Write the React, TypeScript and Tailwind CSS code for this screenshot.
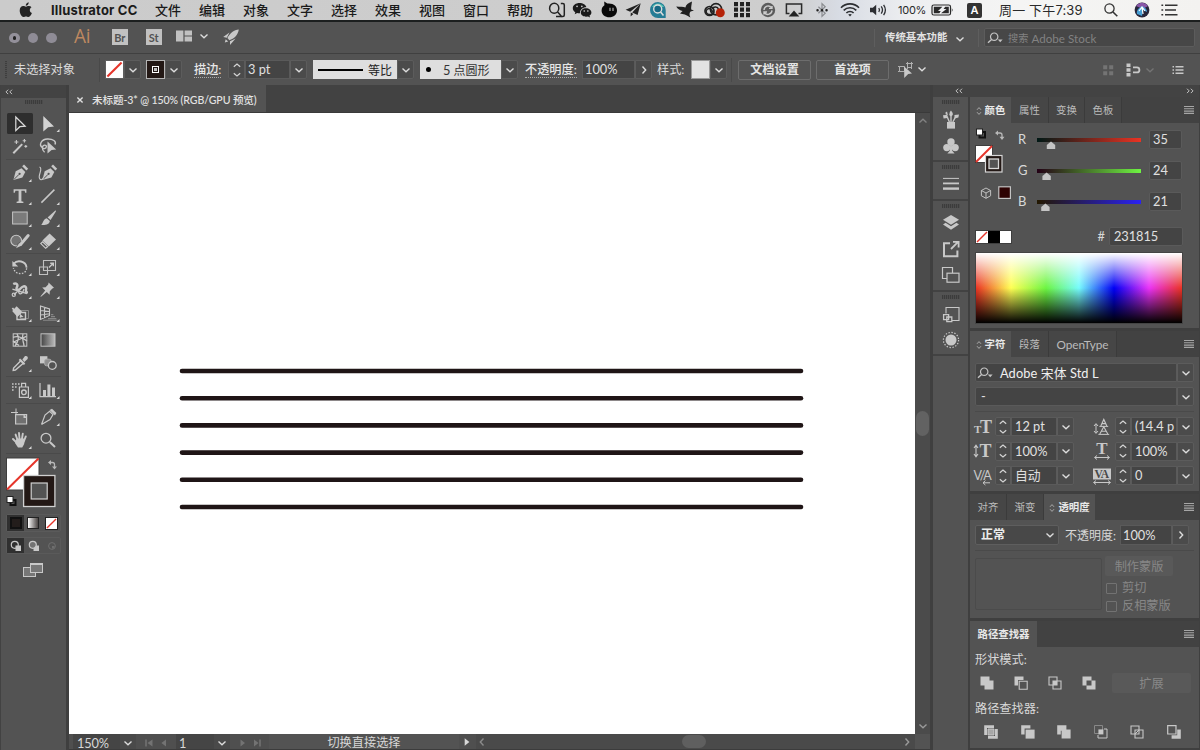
import type { ReactNode } from "react";
import { clsx } from "clsx";

const LIGHT = "#c8c8c8";

/* Icon canvas with the origin in the middle, one unit per pixel */
function Glyph({
  w = 20,
  h = 20,
  className,
  children,
}: {
  w?: number;
  h?: number;
  className?: string;
  children: ReactNode;
}) {
  return (
    <svg
      width={w}
      height={h}
      viewBox={`${-w / 2} ${-h / 2} ${w} ${h}`}
      className={clsx("block shrink-0", className)}
      fill="none"
      stroke="none"
    >
      {children}
    </svg>
  );
}

function Chevron({ dir = "down", color = "#dcdcdc" }: { dir?: "down" | "up" | "left" | "right"; color?: string }) {
  const rotate = { down: 0, left: 90, up: 180, right: 270 }[dir];
  return (
    <Glyph w={10} h={10}>
      <path d="M-3.5-1.5L0 1.7L3.5-1.5" stroke={color} strokeWidth="1.4" transform={`rotate(${rotate})`} />
    </Glyph>
  );
}

function DoubleChevron({ flip = false }: { flip?: boolean }) {
  return (
    <Glyph w={10} h={8}>
      <path
        d="M-.8-2.3L-3-.1L-.8 2.1M3-2.3L.8-.1L3 2.1"
        stroke="#c4c4c4"
        transform={flip ? "scale(-1 1)" : undefined}
      />
    </Glyph>
  );
}

function Grip() {
  return (
    <div className="h-[4px] w-[18px] shrink-0 bg-[repeating-linear-gradient(90deg,#3c3c3c_0_1px,#4c4c4c_1px_2px)]" />
  );
}

function Arrow({ className, dir = "down" }: { className?: string; dir?: "down" | "right" }) {
  return (
    <div
      className={clsx(
        "flex h-full w-[17px] shrink-0 items-center justify-center rounded-r-[2px] border border-[#5c5c5c] bg-[#4b4b4b]",
        className,
      )}
    >
      <Chevron dir={dir} />
    </div>
  );
}

function Stepper({ className }: { className?: string }) {
  return (
    <div
      className={clsx(
        "flex h-full shrink-0 flex-col items-center justify-center rounded-l-[2px] border border-[#5c5c5c] bg-[#4b4b4b]",
        className,
      )}
    >
      <Glyph w={10} h={16}>
        <path d="M-3.2-3.2L0-6L3.2-3.2M-3.2 3.2L0 6L3.2 3.2" stroke="#d4d4d4" strokeWidth="1.2" />
      </Glyph>
    </div>
  );
}

function Field({ className, children }: { className?: string; children?: ReactNode }) {
  return (
    <div
      className={clsx(
        "flex h-full shrink-0 items-center overflow-hidden whitespace-nowrap border border-[#5a5a5a] bg-[#444] px-[2px] text-[12.8px] leading-none text-[#e0e0e0]",
        className,
      )}
    >
      {children}
    </div>
  );
}

/* ---------- macOS menu bar ---------- */

const menus = ["文件", "编辑", "对象", "文字", "选择", "效果", "视图", "窗口", "帮助"];

function Cell({ className, children }: { className: string; children: ReactNode }) {
  return <div className={clsx("flex shrink-0 items-center justify-center", className)}>{children}</div>;
}

function MenuBar() {
  return (
    <div className="flex h-[22px] shrink-0 items-center border-b-[2px] border-[#1c1f1f] bg-[linear-gradient(90deg,#cbcbcb_0%,#cecece_66%,#d8dce4_70%,#eeeff1_76%,#f5f5f4_85%,#f3f2f0_100%)] font-[Inter,'Noto_Sans_CJK_SC',sans-serif] text-[13px] leading-none text-[#1b1b1b]">
      <Cell className="ml-[15px] w-[21px]">
        <Glyph w={16} h={18}>
          <path
            d="M2.9-3.9C1.6-4 .8-3.2 0-3.2C-.8-3.2-1.7-3.9-2.8-3.9C-4.8-3.8-6.3-2.2-6.3.5C-6.3 3.5-4.2 7-2.5 7C-1.6 7-1 6.4 0 6.4C1 6.4 1.5 7 2.5 7C4 7 5.4 4.7 5.9 3.1C4.6 2.6 3.8 1.5 3.8 0C3.8-1.2 4.5-2.2 5.5-2.8C4.9-3.5 4-3.9 2.9-3.9ZM2.7-7.8C1-7.6-.4-6-.2-4.3C1.5-4.3 2.9-6 2.7-7.8Z"
            fill="#222"
          />
        </Glyph>
      </Cell>
      <div className="ml-[15px] w-[104px] shrink-0 whitespace-nowrap text-[13px] font-bold tracking-[0.2px]">
        Illustrator CC
      </div>
      {menus.map((m) => (
        <div key={m} className="w-[44px] shrink-0 font-medium">
          {m}
        </div>
      ))}
      <Cell className="-ml-[6px] w-[24px]">
        <Glyph>
          <path
            d="M3.8-6.5H5.8Q7.3-6.5 7.3-5V5Q7.3 6.5 5.8 6.5H-1M-2.8-6.7A4.6 5 0 1 0-2.8 3.3A4.6 5 0 1 0-2.8-6.7M.7 2L5 7"
            stroke="#222"
            strokeWidth="1.5"
          />
        </Glyph>
      </Cell>
      <Cell className="w-[26px]">
        <Glyph>
          <path
            d="M-2.4-7C-6.2-7-9.2-4.8-9.2-1.8C-9.2 0-8.2 1.3-6.7 2.2L-7.3 4.3L-4.8 3Q-3.3 3.4-2 3.2C-2.5 0 .8-2.8 4.4-2.7C3.8-5.3 1-7-2.4-7Z"
            fill="#1b1b1b"
          />
          <path
            d="M4-1.8C.8-1.8-1.2.2-1.2 2.5C-1.2 5 1.3 6.7 4 6.7L6 6.4L8 7.4L7.5 5.6C8.8 4.8 9.4 3.7 9.4 2.5C9.4.1 7-1.8 4-1.8Z"
            fill="#1b1b1b"
          />
          <path d="M-5-3.6h.1M-.2-3.6h.1M2.2 1h.1M5.8 1h.1" stroke="#ccc" strokeWidth="1.6" strokeLinecap="round" />
        </Glyph>
      </Cell>
      <Cell className="w-[27px]">
        <Glyph>
          <path d="M-4.8-8.6L-1.6-6.4C4.7-7 8-3.5 8 .4C8 4.4 4.5 7.2 .4 7.2C-4 7.2-7.4 4.4-7.4.4C-7.4-2-6.2-3.8-4.6-4.8Z" fill="#090909" />
          <path d="M1-2.2V1M4-2.2V1" stroke="#bbb" strokeWidth="1.1" />
        </Glyph>
      </Cell>
      <Cell className="w-[22px]">
        <Glyph>
          <path d="M7.7-6.8L-7.4-.2L-2.8 1.8ZM7.7-6.8L-.8 2.6L4.6 5ZM-2.2 2.6L-2.4 6.5L.4 4Z" fill="#202020" />
        </Glyph>
      </Cell>
      <Cell className="w-[27px]">
        <Glyph>
          <path d="M0-8A8 8 0 1 0 0 8H7.7V0A8 8 0 0 0 0-8Z" fill="#257c95" />
          <path d="M-6-3A7 7 0 0 1 6-3" fill="#55c3b4" />
          <circle cx="-.3" cy="-1" r="4" fill="#176883" stroke="#ddd" strokeWidth="1.4" />
          <path d="M2.6 2L5.5 5.5" stroke="#ddd" strokeWidth="1.6" />
        </Glyph>
      </Cell>
      <Cell className="w-[28px]">
        <Glyph>
          <path
            d="M7-8.4C3-6.8 1-5 .4-2.6C-1.6-3.6-5-3.2-8.8-3.6C-7.5-1.2-4.6.4-2.4 1L-5 3.4C-1.5 3.8 1 4.6 5.4 7.4C4 4.6 4.4 2.6 5.6 1.4L9 .6L6.2-.6C6-3 6.6-5 7-8.4Z"
            fill="#202020"
          />
        </Glyph>
      </Cell>
      <Cell className="w-[30px]">
        <Glyph w={22}>
          <circle cx="-4.5" cy="1" r="4.5" stroke="#222" strokeWidth="1.7" />
          <circle cx="2" cy="-.8" r="5.6" stroke="#222" strokeWidth="1.7" />
          <path d="M-1.5 4.5H-5A3 3 0 1 1-3.5-1.2L0 3M-1.8-1A3.4 3.4 0 0 1 4.6-.5" stroke="#222" strokeWidth="1.4" />
          <circle cx="6.3" cy="2.7" r="4.5" fill="#b52208" />
        </Glyph>
      </Cell>
      <Cell className="w-[26px]">
        <Glyph>
          {[-6, -0.5, 5].map((y) =>
            [-6, 0, 6].map((x) => <rect key={`${x}${y}`} x={x - 2} y={y - 2} width="4" height="4.2" fill="#222" />),
          )}
        </Glyph>
      </Cell>
      <Cell className="w-[25px]">
        <Glyph>
          <circle r="7.2" fill="#5c5c5c" />
          <path d="M-4 0A4.2 4.2 0 0 1 3.5-2.4M4 .4A4.2 4.2 0 0 1-3.5 2.8M4-4V-1.6H1M-4 4.4V2H-1" stroke="#ccc" strokeWidth="1.4" />
        </Glyph>
      </Cell>
      <Cell className="w-[27px]">
        <Glyph>
          <path d="M-4.5 3.6H-7.6V-6H7.6V3.6H4.5" stroke="#2b2b2b" strokeWidth="1.5" />
          <path d="M0 .5L5.3 6.6H-5.3Z" fill="#222" />
        </Glyph>
      </Cell>
      <Cell className="w-[29px]">
        <Glyph>
          <path d="M-3.6-3.2L3.2 3.2L0 6.4V-6.4L3.2-3.2L-3.6 3.2" stroke="#8a8c90" strokeWidth="1.2" />
          <path d="M-4.5.3h.1M0 .3h.1M4.5.3h.1" stroke="#222" strokeWidth="2.4" strokeLinecap="round" />
        </Glyph>
      </Cell>
      <Cell className="w-[28px]">
        <Glyph>
          <path
            d="M-9-2.3A12.6 12.6 0 0 1 9-2.3M-6.3.4A8.8 8.8 0 0 1 6.3.4M-3.6 3A5 5 0 0 1 3.6 3"
            stroke="#2c2e32"
            strokeWidth="1.6"
          />
          <path d="M-1.8 4.6Q0 3.2 1.8 4.6L0 6.6Z" fill="#2c2e32" />
        </Glyph>
      </Cell>
      <Cell className="w-[27px]">
        <Glyph>
          <path d="M-8-2.3H-5.2L-1.8-5.2V5.2L-5.2 2.3H-8Z" fill="#2c2e32" />
          <path d="M.8-2Q2.2 0 .8 2M3.2-3.6Q5.8 0 3.2 3.6M5.6-5.2Q9.2 0 5.6 5.2" stroke="#2c2e32" strokeWidth="1.3" />
        </Glyph>
      </Cell>
      <div className="ml-[7px] w-[32px] shrink-0 text-[11px] tracking-[-0.25px] text-[#2a2a2a]">100%</div>
      <Cell className="w-[23px]">
        <Glyph w={24}>
          <rect x="-10" y="-5" width="18.5" height="10" rx="1.8" stroke="#2a2a2a" strokeWidth="1.2" />
          <path d="M-8.2-3.2H.4L-4 1H-1.3L-2.6 3.2H-8.2ZM3.2-3.2H6.8V3.2H-1L4.5-1H1.6Z" fill="#2a2a2a" />
          <path d="M9.8-2Q11.6 0 9.8 2Z" fill="#2a2a2a" />
        </Glyph>
      </Cell>
      <Cell className="ml-[14px] h-[15px] w-[15px] rounded-[2px] bg-[#333] text-[11px] font-semibold text-white">A</Cell>
      <div className="ml-[17px] w-[89px] shrink-0 whitespace-nowrap text-[13px] tracking-[0.15px] text-[#2a2a2a]">
        周一 下午7:39
      </div>
      <Cell className="w-[46px]">
        <Glyph>
          <circle cx="-1.5" cy="-1.5" r="4.6" stroke="#333" strokeWidth="1.3" />
          <path d="M2 2L6.3 6.3" stroke="#333" strokeWidth="1.6" />
        </Glyph>
      </Cell>
      <Cell className="w-[16px]">
        <Glyph w={16} h={16}>
          <circle r="7.4" fill="#27263a" />
          <path d="M-6-4A7.2 7.2 0 0 1 6-4L1-1Z" fill="#8a58a8" />
          <path d="M-5 4Q-6-1 0-4Q5-2 5 2L1 0L0 6Z" fill="#479fd5" />
          <path d="M-3 1L0-3L3 1M0-3L1 4" stroke="#fff" strokeWidth="1.2" />
        </Glyph>
      </Cell>
      <Cell className="w-[39px]">
        <Glyph>
          <path d="M-5-4.8H7.5M-5 0H6M-5 4.8H7.5" stroke="#333" strokeWidth="1.6" />
          <path d="M-8.6-4.8H-6.8M-8.6 0H-6.8M-8.6 4.8H-6.8" stroke="#333" strokeWidth="1.6" />
        </Glyph>
      </Cell>
    </div>
  );
}

/* ---------- Application bar ---------- */

function SearchIcon() {
  return (
    <Glyph w={16} h={12}>
      <circle cx="-.8" cy="-1.3" r="3.7" stroke="#c4c4c4" strokeWidth="1.2" />
      <path d="M-3.4 1.4L-7 4.8" stroke="#c4c4c4" strokeWidth="1.4" />
      <path d="M2.8 1.6H7.6L5.2 4.2Z" fill="#c4c4c4" />
    </Glyph>
  );
}

function AppBar() {
  return (
    <div className="flex h-[32px] shrink-0 items-center border-b border-[#404040] bg-[#535353]">
      <div className="ml-[9px] mt-[1px] flex gap-[8px]">
        <div className="flex size-[10.6px] items-center justify-center rounded-full bg-[#93909a]">
          <div className="size-[3.6px] rounded-full bg-[#222]" />
        </div>
        <div className="size-[10.6px] rounded-full bg-[#8f8c96]" />
        <div className="size-[10.6px] rounded-full bg-[#8f8c96]" />
      </div>
      <div className="ml-[17px] w-[38px] font-[Open_Sans,sans-serif] text-[20px] font-medium leading-none tracking-[-0.2px] text-[#bd8860]">
        <div className="-mt-[3px] origin-left scale-x-[0.95]">Ai</div>
      </div>
      <div className="-mt-px flex size-[16px] items-center justify-center bg-[#c1c1c1] text-[11px] font-bold leading-none text-[#535353]">
        Br
      </div>
      <div className="-mt-px ml-[18px] flex size-[16px] items-center justify-center bg-[#c1c1c1] text-[11px] font-bold leading-none text-[#535353]">
        St
      </div>
      <Glyph w={18} h={12} className="-mt-[3px] ml-[13px]">
        <path d="M-8-5.5H-.6V5.5H-8ZM.6-5.5H8V-.6H.6ZM.6.6H8V5.5H.6Z" fill="#c1c1c1" />
      </Glyph>
      <div className="-mt-[3px] ml-[6px]">
        <Chevron />
      </div>
      <Glyph className="-mt-[2px] ml-[12px]">
        <path
          d="M7.8-7.6C3-7.2-1-4-3.6 1L-1.6 3.2C3 1.6 7-2 7.8-7.6ZM-1.5-4.4L-7.8 0L-4.2.8ZM4.6 1.4L-1 8L-1 4.2ZM-5.3 2.2L-6.2 5.6L-2.8 4.6Z"
          fill="#c8c8c8"
        />
      </Glyph>
      <div className="flex-1" />
      <div className="h-[18px] w-px bg-[#5e5e5e]" />
      <div className="ml-[10px] w-[70px] whitespace-nowrap text-[10.4px] font-bold text-[#e2e2e2]">传统基本功能</div>
      <div className="mt-[2px]">
        <Chevron />
      </div>
      <div className="ml-[13px] h-[18px] w-px bg-[#5e5e5e]" />
      <div className="ml-[5px] mr-[5px] flex h-[19px] w-[211px] items-center rounded-[2px] border border-[#5c5c5c] bg-[#474747] text-[11.6px] text-[#828282]">
        <div className="ml-[2px] w-[21px]">
          <SearchIcon />
        </div>
        <span className="mt-[3px] text-[10.2px]">搜索</span>
        <span className="ml-[3px] mt-[3px] tracking-[0.05px]">Adobe Stock</span>
      </div>
    </div>
  );
}

/* ---------- Control bar ---------- */

function NoneSwatch({ className }: { className: string }) {
  return (
    <svg viewBox="0 0 18 18" className={clsx("block shrink-0", className)}>
      <rect width="18" height="18" fill="#fff" />
      <path d="M1.5 16.5L16.5 1.5" stroke="#e6352b" strokeWidth="2.2" />
    </svg>
  );
}

function ControlBar() {
  return (
    <div className="flex h-[31px] shrink-0 items-center bg-[#535353] text-[12.2px] leading-none text-[#dadada]">
      <div className="ml-[5px] h-[18px] w-[2px] bg-[repeating-linear-gradient(180deg,#3e3e3e_0_1px,#505050_1px_2px)]" />
      <div className="ml-[7px] w-[85px] whitespace-nowrap pt-px">未选择对象</div>
      <div className="h-[24px] w-px bg-[#494949]" />
      <div className="ml-[5px] flex h-[19px]">
        <NoneSwatch className="size-[19px] border border-[#5f5f5f]" />
        <Arrow />
      </div>
      <div className="ml-[5px] flex h-[19px]">
        <div className="flex size-[19px] items-center justify-center border border-[#b5b5b5] bg-[#231815]">
          <div className="flex size-[7px] items-center justify-center border border-white bg-[#231815]">
            <div className="size-[3px] bg-[#c4c4c4]" />
          </div>
        </div>
        <Arrow />
      </div>
      <div className="ml-[12px] w-[33px] whitespace-nowrap pt-[2px] font-medium text-[#e6e6e6]">
        <span className="border-b border-dotted border-[#aaa]">描边:</span>
      </div>
      <div className="ml-px flex h-[19px]">
        <Stepper className="w-[17px]" />
        <Field className="w-[45px]">3 pt</Field>
        <Arrow />
      </div>
      <div className="ml-[6px] flex h-[19px]">
        <div className="flex w-[84px] items-center bg-[#dedede] text-[12px] text-[#222]">
          <div className="ml-[5px] h-[2px] w-[45px] bg-black" />
          <span className="ml-[5px] pt-[2px]">等比</span>
        </div>
        <Arrow />
      </div>
      <div className="ml-[6px] flex h-[19px]">
        <div className="flex w-[81px] items-center bg-[#dedede] text-[12px] text-[#333]">
          <div className="ml-[6px] size-[5px] rounded-full bg-black" />
          <span className="ml-[12px] whitespace-nowrap pt-[2px]">
            <span className="text-[12.8px]">5</span> 点圆形
          </span>
        </div>
        <Arrow />
      </div>
      <div className="ml-[7px] w-[57px] whitespace-nowrap pt-[2px] font-medium text-[#e6e6e6]">
        <span className="border-b border-dotted border-[#aaa]">不透明度:</span>
      </div>
      <div className="flex h-[19px]">
        <Field className="w-[53px]">100%</Field>
        <Arrow dir="right" />
      </div>
      <div className="ml-[5px] w-[34px] whitespace-nowrap pt-[2px]">样式:</div>
      <div className="flex h-[19px]">
        <div className="w-[19px] border border-[#999] bg-[#e2e2e2]" />
        <Arrow />
      </div>
      <div className="ml-[4px] h-[24px] w-px bg-[#494949]" />
      <div className="ml-[6px] flex h-[20px] w-[73px] items-center justify-center rounded-[2px] border border-[#6d6d6d] pt-[2px] font-bold text-[#e4e4e4]">
        文档设置
      </div>
      <div className="ml-[5px] flex h-[20px] w-[73px] items-center justify-center rounded-[2px] border border-[#6d6d6d] pt-[2px] font-bold text-[#e4e4e4]">
        首选项
      </div>
      <Glyph className="ml-[6px]">
        <path d="M-5.5-3.5H-.5V1.5H-5.5ZM2.5-6.5H6.5V-2.5H2.5ZM-7-3.5H-5.5M-7 1.5H-5.5M1-6.5H8M2.5-8V-1M6.5-8V-1" stroke="#b0b0b0" />
        <path d="M-.8-3.4L7 3.6L3.2 4L-.8 8Z" fill={LIGHT} />
      </Glyph>
      <div className="-mt-[2px] ml-[2px]">
        <Chevron />
      </div>
      <div className="flex-1" />
      <Glyph w={14} h={14} className="mr-[10px]">
        <path
          d="M-4.8-4.8H-.8V-.8H-4.8ZM1.2-4.8H5.2V-.8H1.2ZM-4.8 1.2H-.8V5.2H-4.8ZM1.2 1.2H5.2V5.2H1.2Z"
          fill="#747474"
        />
      </Glyph>
      <Glyph w={16} h={16} className="mr-[4px]">
        <path d="M-6.5-6.5H-2.5V-3H-6.5ZM-6.5-1.7H-2.5V1.7H-6.5ZM-6.5 3H-2.5V6.5H-6.5Z" fill={LIGHT} />
        <path d="M0-2.6H3.9A2.5 2.5 0 0 1 3.9 2.4H0" stroke={LIGHT} strokeWidth="1.8" />
      </Glyph>
      <Chevron color="#747474" />
      <Glyph w={14} h={14} className="ml-[16px] mr-[15px]">
        <path d="M-2.5-3.3H5.5M-2.5 0H5.5M-2.5 3.3H5.5" stroke={LIGHT} strokeWidth="1.4" />
        <path d="M-5.5-3.3H-4M-5.5 0H-4M-5.5 3.3H-4" stroke={LIGHT} strokeWidth="1.4" />
      </Glyph>
    </div>
  );
}

/* ---------- Tools ---------- */

function Tool({ sub, active, short, children }: { sub?: boolean; active?: boolean; short?: boolean; children: ReactNode }) {
  return (
    <div className={clsx("flex w-[28px] items-start justify-center", short ? "h-[22.5px]" : "h-[23px]")}>
      <Glyph w={28} h={22}>
        {active && <rect x="-13" y="-10" width="26" height="21" rx="1.5" fill="#2e2e2e" />}
        {children}
        {sub && <path d="M11.5 6V9H8.5Z" fill="#d6d6d6" />}
      </Glyph>
    </div>
  );
}

function ToolGroup({ children }: { children: ReactNode }) {
  return (
    <div className="mx-[5px] mb-[2px] grid grid-cols-[28px_28px] border-b border-[#4a4a4a] pb-px">{children}</div>
  );
}

function PenNib() {
  return (
    <>
      <path d="M1.5-4.8L5.3-1L2.4 4.4L-6.6 7L-4.3-1.8Z" fill={LIGHT} />
      <path d="M-6 6.4L-1 1.4" stroke="#535353" />
      <circle cx="-.4" cy=".8" r="1.1" fill="#535353" />
      <path d="M2.2-6.8L4-8.4L8.2-4.2L6.4-2.4Z" fill={LIGHT} />
    </>
  );
}

function ToolPanel() {
  return (
    <div className="flex w-[69px] shrink-0 flex-col border-l border-r-[3px] border-l-[#424242] border-r-[#3f3f3f] bg-[#535353]">
      <div className="flex h-[13px] shrink-0 items-center bg-[#434343] pl-[3px]">
        <DoubleChevron />
      </div>
      <div className="flex h-[14px] shrink-0 justify-center pt-[2px]">
        <Grip />
      </div>
      <ToolGroup>
        <Tool active>
          <path d="M-4.2-6L5.2 3.2L-.2 3.7L-4.2 7.6Z" stroke="#dcdcdc" strokeWidth="1.2" />
        </Tool>
        <Tool sub>
          <path d="M-4.7-7L6 3.6L.2 4.3L-4.7 8.6Z" fill="#d2d2d2" />
        </Tool>
        <Tool>
          <path d="M-6.7 7.2L2.2-1.9" stroke={LIGHT} strokeWidth="2" />
          <path
            d="M-3.6-6V-2M-5.6-4H-1.6M4.4-7V-3.6M2.7-5.3H6.1M5.8-1V1.8M4.4.4H7.2"
            stroke={LIGHT}
            strokeWidth="1.1"
          />
        </Tool>
        <Tool>
          <path
            d="M-5.6 1.6C-9.4-1-7-6.6-.6-7C5-7.2 8.6-4.5 7-1.5M-5.6 1.6C-5-1.8-1.4-1.4-1.6.8C-1.8 3.2-5.4 3-5.6 1.6C-5.8 3.6-5 5-3.4 6.2"
            stroke={LIGHT}
            strokeWidth="1.4"
          />
          <path d="M-.5-4.5L8.2 3.4L3.6 4L-.5 7.4Z" fill={LIGHT} />
        </Tool>
      </ToolGroup>
      <ToolGroup>
        <Tool short sub>
          <PenNib />
        </Tool>
        <Tool short>
          <g transform="translate(1 0)">
            <PenNib />
          </g>
          <path d="M-8.5-6C-5-4.8-9 .6-8.8 4C-8.5 7.5-5.5 7.5-4.5 4.5" stroke={LIGHT} strokeWidth="1.1" />
        </Tool>
        <Tool short sub>
          <path
            d="M-6.4-6.8H6.4V-3.2H5.2L4.6-5.2H1.4V5.2L3.4 5.8V7H-3.4V5.8L-1.4 5.2V-5.2H-4.6L-5.2-3.2H-6.4Z"
            fill={LIGHT}
          />
        </Tool>
        <Tool short sub>
          <path d="M-6.6 6.6L6.4-6.4" stroke={LIGHT} strokeWidth="1.5" />
        </Tool>
        <Tool short sub>
          <rect x="-7.4" y="-6" width="14.6" height="12" fill="#7b7b7b" stroke="#c4c4c4" />
        </Tool>
        <Tool short sub>
          <path d="M7.6-7.8L8-6.8L2.6 2L-.4-.6Z" fill={LIGHT} />
          <path d="M-1.2.2L1.8 3C1.5 6-1.5 7.4-7 7C-4.8 5.6-5.2 1-1.2.2Z" fill={LIGHT} />
        </Tool>
        <Tool short sub>
          <circle cx="-3.8" cy="-.4" r="5.4" fill="#737373" stroke={LIGHT} strokeWidth="1.1" />
          <path d="M9-5.4L1.2 4.2L-4 7L-1.8 2.2Z" fill="#535353" />
          <path d="M8.2-5.4L.8 3.2" stroke={LIGHT} strokeWidth="3" strokeLinecap="round" />
          <path d="M-.8 2L1.8 4.6L-4 7.2Z" fill={LIGHT} />
        </Tool>
        <Tool short sub>
          <path d="M1.6-7.6L8-1.4L.8 5.6L-5.6-.6Z" fill={LIGHT} />
          <path d="M-5.4.8L-.4 5.6L-2.4 7.2L-7.2 2.6Z" stroke={LIGHT} strokeWidth="1.2" />
        </Tool>
      </ToolGroup>
      <ToolGroup>
        <Tool sub>
          <path d="M-6.2-3.2C-3-7.4 5.8-6.4 6.6.6" stroke={LIGHT} strokeWidth="1.8" />
          <path d="M6.6 1.2C6.2 8-4.5 9-6.6 1" stroke={LIGHT} strokeWidth="1.3" strokeDasharray="1.6 1.4" />
          <path d="M-7.6-6V-.4H-1.8Z" fill={LIGHT} />
        </Tool>
        <Tool sub>
          <path d="M-8.5 0H-.5V7.5H-8.5ZM-4.5-6.5H7.5V3.5H-4.5Z" stroke="#c0c0c0" strokeWidth="1.1" />
          <path d="M1 .5L4.5-3M2.2-3.8H5.3V-.8" stroke={LIGHT} strokeWidth="1.4" />
        </Tool>
        <Tool sub>
          <path
            d="M-6.8-6C-3.6-7.6-1.6-5.4-3.2-2.6C-4.4-.2-2 1 .2-1.2C2.4-3.6 5-4.6 6-2.6C7 0 4 2.4 8 2.4"
            stroke={LIGHT}
            strokeWidth="2.4"
          />
          <path d="M-7.6-.8L7 3.6M-5.8 4.8L-1.4 0C-2 5.2 2.4 5.2 4-1" stroke={LIGHT} strokeWidth="1.3" />
          <circle cx="-6.2" cy="4.8" r="1.6" stroke={LIGHT} strokeWidth="1.2" />
        </Tool>
        <Tool sub>
          <path d="M.6-7.6L6-2.2L4.4-1.4L1.8 1.3L1.6 4.8L-1.2 2L-7 6.8L-7.6 6.4L-2.8.4L-5.8-2.6L-2.4-2.8L.2-5.4Z" fill={LIGHT} />
        </Tool>
        <Tool sub>
          <path d="M.5-2.5H8.5V5.5H.5Z" stroke="#888" />
          <path d="M-3 0V6.5H5.5V-.5H2" stroke={LIGHT} strokeWidth="1.4" />
          <path d="M-3.4-6.8L2.6-.8L-2.6 4L-7.8-2Z" fill={LIGHT} />
          <path d="M-7.6-5L-2 1.5" stroke={LIGHT} strokeWidth="1.8" />
          <path d="M.4 1L3.6 4L-.6 4.4Z" fill={LIGHT} />
        </Tool>
        <Tool sub>
          <path d="M-7.5-7V6.5L1.5 2.5V-4ZM-3.5-6V5M-7.5-2.5L1.5-1.5M-7.5 2L1.5.8" stroke={LIGHT} strokeWidth="1.1" />
          <path d="M3 1.6H5.4M3 3.6H7M0 5.6H8.4M-5 7.2H9.6" stroke="#888" strokeWidth="1.1" />
        </Tool>
      </ToolGroup>
      <ToolGroup>
        <Tool>
          <rect x="-6.8" y="-6.2" width="13.6" height="12.4" stroke={LIGHT} />
          <path
            d="M-3-6C0-2-2 2-5 6M-7-2.6C-2-5 3-2 7 1M-6.6 2.4C-1-1 3-2 6.6-3.6M3-6C1-1 4 2 4 6M-7 1L-1 5.6"
            stroke={LIGHT}
            strokeWidth="1.3"
          />
        </Tool>
        <Tool>
          <defs>
            <linearGradient id="toolGradient">
              <stop offset="0" stopColor="#444" />
              <stop offset="1" stopColor="#bbb" />
            </linearGradient>
          </defs>
          <rect x="-7" y="-6.2" width="14" height="12.4" fill="url(#toolGradient)" stroke="#c0c0c0" />
        </Tool>
        <Tool sub>
          <path d="M1-2.6L3.6 0L-4.6 7L-6.8 7.4L-6.4 5Z" stroke={LIGHT} strokeWidth="1.4" />
          <path d="M-.6-3.8L4.6 1.4" stroke={LIGHT} strokeWidth="2" />
          <path d="M2.4-3.6L5-7Q8.6-7.4 7.6-4L4.4-1Z" fill={LIGHT} />
        </Tool>
        <Tool>
          <rect x="-8" y="-6.8" width="7.4" height="7.2" fill={LIGHT} />
          <rect x="-3.4" y="-3.8" width="6.6" height="6.6" rx="2" fill="#8e8e8e" stroke="#aaa" />
          <circle cx="4.3" cy="2.4" r="3.9" fill="#535353" stroke={LIGHT} strokeWidth="1.3" />
        </Tool>
      </ToolGroup>
      <ToolGroup>
        <Tool sub>
          <path
            d="M-8-6h1.6M-5-6h1.6M-2-6h1.6M-8-3h1.6M-5-3h1.6M-8 0h1.6"
            stroke={LIGHT}
            strokeWidth="1.6"
          />
          <path d="M-.6-3H8.4V7.4H-.6ZM1.6-3V-6.6H5.6V-3" stroke={LIGHT} strokeWidth="1.2" />
          <circle cx="3.9" cy="2.3" r="2.3" stroke={LIGHT} strokeWidth="1.4" />
        </Tool>
        <Tool sub>
          <path d="M-8-7V6.6H8" stroke={LIGHT} strokeWidth="1.2" />
          <path d="M-5 0H-2V6.5H-5ZM-.6-5.4H2.4V6.5H-.6ZM4-2.6H7V6.5H4Z" fill={LIGHT} />
        </Tool>
      </ToolGroup>
      <ToolGroup>
        <Tool>
          <path d="M-4-8.5V-1.5M-9-4.5H-2" stroke={LIGHT} />
          <path d="M-4.4-2.4H6.6V7H-4.4Z" fill="#707070" stroke={LIGHT} strokeWidth="1.2" />
          <path d="M3.5-3V1H7Z" fill={LIGHT} />
        </Tool>
        <Tool sub>
          <path d="M-6.5 7.5L-3-2L1.6-5.6L5-2.4L2 2.6L-6.5 7.5" stroke={LIGHT} strokeWidth="1.2" />
          <path d="M1.6-7L4-8.2L8.4-4L7-1.4Z" fill={LIGHT} />
        </Tool>
        <Tool sub>
          <path
            d="M-4.4-5.4L-2.4 0M-1-7L-.4 0M2.8-6.4L1.8 0M5.8-3.6L3.6 2M-7-1L-3 3"
            stroke={LIGHT}
            strokeWidth="1.9"
            strokeLinecap="round"
          />
          <path d="M-3.4-1.4H4.4L4.2 4L2.2 7.4H-2L-5 3Z" fill={LIGHT} />
        </Tool>
        <Tool>
          <circle cx="-2" cy="-1.8" r="4.9" stroke={LIGHT} strokeWidth="1.3" />
          <path d="M1.8 2L7 7" stroke={LIGHT} strokeWidth="2" />
        </Tool>
      </ToolGroup>
      {/* Fill / stroke proxies */}
      <svg width="65" height="54" viewBox="0 0 65 54" className="block shrink-0" fill="none">
        <rect x="5.5" y="2" width="32.5" height="32" fill="#fff" stroke="#3e3e3e" />
        <path d="M6 33.5L37.5 2.5" stroke="#e6352b" strokeWidth="2" />
        <rect x="22.6" y="19.5" width="31.3" height="31" fill="#231815" stroke="#d0d0d0" strokeWidth="1.3" />
        <rect x="30.2" y="27" width="16" height="16" fill="#535353" stroke="#d0d0d0" strokeWidth="1.2" />
        <path d="M49.5 6.5H51.5Q53.5 6.5 53.5 8.5V11" stroke="#b8b8b8" strokeWidth="1.3" />
        <path d="M47 6.5L50 4V9ZM53.5 13.5L51 10.5H56Z" fill="#b8b8b8" />
        <rect x="9.5" y="44" width="5" height="5" stroke="#111" strokeWidth="2" />
        <rect x="6" y="40.5" width="6" height="6" fill="#fff" stroke="#222" />
      </svg>
      <div className="ml-[5px] mt-[4px] flex h-[18px] w-[55px] items-center rounded-[2px] border border-[#5a5a5a]">
        <div className="flex h-full w-[17px] items-center justify-center bg-[#303030]">
          <div className="size-[12px] border-2 border-[#111] bg-[#231d1b]" />
        </div>
        <div className="ml-[3px] size-[12px] border border-[#222] bg-linear-to-r from-white to-[#4a4543]" />
        <div className="ml-[6px] border border-[#222]">
          <NoneSwatch className="size-[11px]" />
        </div>
      </div>
      <div className="ml-[5px] mt-[5px] flex h-[17px] w-[55px] items-center rounded-[2px] border border-[#5a5a5a]">
        <div className="flex h-full w-[17px] items-center justify-center bg-[#303030]">
          <Glyph w={14} h={14}>
            <circle cx="-1.2" cy="-1.2" r="3.5" stroke={LIGHT} strokeWidth="1.2" />
            <rect x="-.5" y="-.5" width="5.5" height="5.5" fill={LIGHT} />
          </Glyph>
        </div>
        <Glyph w={14} h={14} className="ml-[3px]">
          <rect x="-.5" y="-.5" width="5.5" height="5.5" fill={LIGHT} />
          <circle cx="-1.2" cy="-1.2" r="3.5" fill="#737373" stroke={LIGHT} strokeWidth="1.2" />
        </Glyph>
        <Glyph w={14} h={14} className="ml-[4px]">
          <circle r="3.4" stroke="#6e6e6e" />
          <path d="M0 0H2.5V2.5H0Z" fill="#6e6e6e" />
        </Glyph>
      </div>
      <Glyph w={24} h={18} className="ml-[20px] mt-[7px]">
        <rect x="-9.5" y="-2.5" width="12" height="9" fill="#777" stroke={LIGHT} />
        <rect x="-2.5" y="-6.5" width="12" height="9" fill="#777" stroke={LIGHT} />
        <path d="M-3-6H10" stroke={LIGHT} strokeWidth="2" />
      </Glyph>
    </div>
  );
}

/* ---------- Document ---------- */

const strokes = [258, 285.2, 312.4, 339.6, 366.8, 394];

function DocumentArea() {
  return (
    <div className="flex w-[861px] shrink-0 flex-col">
      <div className="flex h-[28px] shrink-0 items-stretch border-b border-[#3a3a3a] bg-[#424242]">
        <div className="flex w-[197px] items-center bg-[#535353] pt-[2px] leading-none text-[#e4e4e4]">
          <Glyph w={8} h={8} className="ml-[7px]">
            <path d="M-2.6-2.6L2.6 2.6M-2.6 2.6L2.6-2.6" stroke="#e0e0e0" strokeWidth="1.4" />
          </Glyph>
          <span className="ml-[8px] whitespace-nowrap pt-px text-[10.6px] font-medium tracking-[-0.12px]">
            未标题-3* @ 150% (RGB/GPU 预览)
          </span>
        </div>
      </div>
      <div className="flex h-[621px] shrink-0">
        <svg width="846" height="621" viewBox="0 0 846 621" className="block bg-white">
          {strokes.map((y) => (
            <path key={y} d={`M113 ${y}H732`} stroke="#1f1516" strokeWidth="4.6" strokeLinecap="round" />
          ))}
        </svg>
        <div className="flex w-[15px] flex-col items-center bg-[#4b4b4b]">
          <div className="mt-[3px]">
            <Chevron dir="up" color="#828282" />
          </div>
          <div className="mt-[285px] h-[25px] w-[13px] rounded-full bg-[#626262]" />
          <div className="mb-[3px] mt-auto">
            <Chevron color="#9a9a9a" />
          </div>
        </div>
      </div>
      <div className="flex h-[16px] shrink-0 items-center border-b border-[#3c3c3c] bg-[#4f4f4f] leading-none text-[#d8d8d8]">
        <div className="ml-[4px] flex h-[15px] w-[47px] items-center bg-[#454545] pl-[4px] pt-[4px] text-[12.8px] tracking-[-0.2px]">
          150%
        </div>
        <div className="flex h-[15px] w-[16px] items-center justify-center bg-[#4a4a4a] pt-[3px]">
          <Chevron />
        </div>
        <Glyph w={34} h={14} className="ml-[4px] mt-[2px]">
          <path d="M-4.5-3.6V3.6L-9.5 0ZM9-3.6V3.6L4.4 0Z" fill="#737373" />
          <path d="M-11-3.6V3.6" stroke="#737373" strokeWidth="1.5" />
        </Glyph>
        <div className="ml-[2px] flex h-[15px] w-[38px] items-center bg-[#454545] pl-[3px] pt-[4px] text-[12.8px]">1</div>
        <div className="flex h-[15px] w-[16px] items-center justify-center bg-[#4a4a4a] pt-[3px]">
          <Chevron />
        </div>
        <Glyph w={34} h={14} className="mt-[2px]">
          <path d="M-6.5-3.6V3.6L-2-0ZM7-3.6V3.6L11.5 0Z" fill="#737373" />
          <path d="M13-3.6V3.6" stroke="#737373" strokeWidth="1.5" />
        </Glyph>
        <div className="ml-[5px] flex h-[15px] w-[190px] items-center justify-center bg-[#535353] pt-[4px] text-[12.2px]">
          切换直接选择
        </div>
        <Glyph w={10} h={12} className="ml-[3px] mt-px">
          <path d="M-2.3-3.8V3.8L2.4 0Z" fill="#d8d8d8" />
        </Glyph>
        <div className="ml-[4px] flex h-[15px] flex-1 items-center bg-[#4a4a4a] pl-px">
          <Chevron dir="left" color="#8a8a8a" />
          <div className="ml-[195px] h-[13px] w-[24px] rounded-full bg-[#5f5f5f]" />
          <div className="ml-auto mr-[3px]">
            <Chevron dir="right" color="#9a9a9a" />
          </div>
        </div>
        <div className="h-[15px] w-[15px] bg-[#535353]" />
      </div>
    </div>
  );
}

/* ---------- Icon dock ---------- */

function DockGroup({ className, children }: { className: string; children: ReactNode }) {
  return (
    <div className={clsx("flex shrink-0 flex-col items-center border-b-2 border-[#424242] pl-px pt-[3px]", className)}>
      <Grip />
      {children}
    </div>
  );
}

function IconDock() {
  return (
    <div className="w-[35px] shrink-0 bg-[#535353]">
      <DockGroup className="h-[65px]">
        <Glyph className="mt-[6px]">
          <path d="M-4 2H4V8.6H-4Z" fill={LIGHT} />
          <path d="M-4.8-5.6L-1.6 2M0-8V2M5-4L1.8 2" stroke={LIGHT} strokeWidth="1.4" />
          <path
            d="M-1.8-5Q-1.4-8.4 0-9.4Q1.8-7.6 1.8-5L0-3.4ZM-7.4-1.5L-8-4.8L-4.6-5L-3.6-2ZM3.4-5L8-5.6L7.4-2.4L3.6-1.6ZM-6-7L-4-8.4L-3-4.6Z"
            fill={LIGHT}
          />
        </Glyph>
        <Glyph className="mt-[6px]">
          <circle cy="-4" r="3.7" fill={LIGHT} />
          <circle cx="-4.2" cy="1.6" r="3.6" fill={LIGHT} />
          <circle cx="4.2" cy="1.6" r="3.6" fill={LIGHT} />
          <path d="M-.8-2H.8L1.2 4.8L3.6 7.4H-3.6L-1.2 4.8Z" fill={LIGHT} />
        </Glyph>
      </DockGroup>
      <DockGroup className="h-[39px]">
        <Glyph className="mt-[5px]">
          <path d="M-8-5.6H8" stroke={LIGHT} />
          <path d="M-8-.6H8" stroke={LIGHT} strokeWidth="1.8" />
          <path d="M-8 4.6H8" stroke={LIGHT} strokeWidth="2.4" />
        </Glyph>
      </DockGroup>
      <DockGroup className="h-[91px]">
        <Glyph className="mt-[5px]">
          <path d="M0-8L8-3.2L0 1.8L-8-3.2Z" fill={LIGHT} />
          <path d="M-8 1.4L-5.4-.2L0 3.2L5.4-.2L8 1.4L0 6.8Z" fill={LIGHT} />
        </Glyph>
        <Glyph className="mt-[6px]">
          <path d="M-1-5.8H-7V7.2H6.4V1.6" stroke={LIGHT} strokeWidth="2" />
          <path d="M0 0L6.6-6.6M2-7.2H7.6V-1.6" stroke={LIGHT} strokeWidth="1.8" />
        </Glyph>
        <Glyph className="mt-[6px]">
          <path d="M-4 3.5H-8.5V-7.5H1.5V-2" stroke={LIGHT} strokeWidth="1.2" />
          <rect x="-4" y="-1.8" width="12" height="9" stroke={LIGHT} strokeWidth="1.2" />
        </Glyph>
      </DockGroup>
      <DockGroup className="h-[64px]">
        <Glyph className="mt-[5px]">
          <path d="M-5-.5V-6.5H8V6.5H1" stroke={LIGHT} strokeWidth="1.1" />
          <path d="M-7.4.6H-2.4V5.6H-7.4ZM-4.2 3H.8V7.6H-4.2Z" stroke={LIGHT} strokeWidth="1.3" />
        </Glyph>
        <Glyph className="mt-[6px]">
          <circle r="5.5" fill={LIGHT} />
          <circle r="7.6" stroke={LIGHT} strokeWidth="1.2" strokeDasharray="1.4 1.6" />
        </Glyph>
      </DockGroup>
    </div>
  );
}

/* ---------- Right-hand panels ---------- */

function TabStrip({ tabs, active }: { tabs: { label: string; width: string }[]; active: number }) {
  return (
    <div className="flex h-[26px] shrink-0 items-stretch bg-[#424242] text-[10.4px] leading-none">
      {tabs.map((t, i) => (
        <div
          key={t.label}
          className={clsx(
            "flex shrink-0 items-center justify-center whitespace-nowrap pt-px",
            t.width,
            i === active ? "bg-[#535353] font-bold text-[#e8e8e8]" : "border-r border-[#3b3b3b] bg-[#464646] text-[#bcbcbc]",
          )}
        >
          {i === active && tabs.length > 1 && (
            <Glyph w={6} h={10} className="mr-[3px]">
              <path d="M-2-1.2L0-3.4L2-1.2M-2 1.2L0 3.4L2 1.2" stroke="#aaa" />
            </Glyph>
          )}
          {t.label}
        </div>
      ))}
      <Glyph w={12} h={10} className="ml-auto mr-[4px] self-center">
        <path d="M-5-3.5H5M-5-1.2H5M-5 1.1H5M-5 3.4H5" stroke="#a6a6a6" strokeWidth="1.1" />
      </Glyph>
    </div>
  );
}

const channels = [
  { name: "R", value: 35, from: "#001815", to: "#ea3323" },
  { name: "G", value: 24, from: "#230015", to: "#6ef442" },
  { name: "B", value: 21, from: "#231800", to: "#2a22f2" },
];

function ColorPanel() {
  return (
    <div className="flex h-[234px] shrink-0 flex-col border-b-[3px] border-[#3f3f3f]">
      <TabStrip
        active={0}
        tabs={[
          { label: "颜色", width: "w-[41px]" },
          { label: "属性", width: "w-[38px]" },
          { label: "变换", width: "w-[36px]" },
          { label: "色板", width: "w-[37px]" },
        ]}
      />
      <div className="flex h-[100px] shrink-0">
        <svg width="48" height="92" viewBox="0 0 48 92" className="block shrink-0" fill="none">
          <rect x="9.5" y="9" width="5.5" height="5.5" stroke="#111" strokeWidth="2" />
          <rect x="6.5" y="6" width="6" height="6" fill="#fff" stroke="#222" />
          <path d="M27.5 10H30Q32 10 32 12V14" stroke="#b8b8b8" strokeWidth="1.3" />
          <path d="M25 10L28 7.5V12.5ZM32 17L29.5 13.8H34.5Z" fill="#b8b8b8" />
          <rect x="5.5" y="22.5" width="17" height="17" fill="#fff" stroke="#3e3e3e" />
          <path d="M6 39L22 23" stroke="#e6352b" strokeWidth="1.9" />
          <rect x="15.5" y="32.5" width="16.5" height="16.5" fill="#231815" stroke="#d6d6d6" strokeWidth="1.2" />
          <rect x="19" y="36" width="9.5" height="9.5" fill="#535353" stroke="#d6d6d6" strokeWidth="1.3" />
          <path d="M16 65L20.6 67.5V72.8L16 75.3L11.4 72.8V67.5ZM11.4 67.5L16 70L20.6 67.5M16 70V75.3" stroke="#c0c0c0" />
          <rect x="28.8" y="63.8" width="11.6" height="11.6" fill="#2e0303" stroke="#c4c4c4" strokeWidth="1.2" />
        </svg>
        <div className="flex flex-col gap-[12px] pt-[7px]">
          {channels.map((c) => (
            <div key={c.name} className="flex h-[19px] items-center text-[13px] leading-none text-[#d8d8d8]">
              <div className="w-[19px]">{c.name}</div>
              <svg width="104" height="14" viewBox="0 0 104 14" className="mt-[10px] block overflow-visible">
                <defs>
                  <linearGradient id={`channel${c.name}`}>
                    <stop offset="0" stopColor={c.from} />
                    <stop offset="1" stopColor={c.to} />
                  </linearGradient>
                </defs>
                <rect width="104" height="4" fill={`url(#channel${c.name})`} />
                <path
                  d="M0 3.4L4.2 7V11H-4.2V7Z"
                  fill="#c4c4c4"
                  transform={`translate(${(c.value / 255) * 102} 0)`}
                />
              </svg>
              <Field className="ml-[8px] w-[33px] rounded-[2px] pl-[3px]">{c.value}</Field>
            </div>
          ))}
        </div>
      </div>
      <div className="flex h-[29px] shrink-0 items-center text-[12.8px] text-[#d8d8d8]">
        <div className="-mt-[2px] ml-[5px] flex h-[14px] w-[37px] border border-[#3e3e3e]">
          <NoneSwatch className="size-[12px]" />
          <div className="w-[12px] bg-black" />
          <div className="w-[11px] bg-white" />
        </div>
        <span className="-mt-[2px] ml-auto mr-[4px]">#</span>
        <div className="-mt-[2px] mr-[16px] h-[19px]">
          <Field className="w-[74px] rounded-[2px] pl-[4px] tracking-[-0.05px]">231815</Field>
        </div>
      </div>
      <div className="ml-[5px] h-[72px] w-[208px] shrink-0 border border-[#444] bg-[linear-gradient(180deg,#fff_0%,#fff0_50%,#0000_50%,#000_100%),linear-gradient(90deg,#ea3323_0%,#ffff54_17%,#6cf542_34%,#75fbfd_50%,#0000f5_67%,#ea33f7_84%,#ea3323_100%)]" />
    </div>
  );
}

function CharGlyph({ kind }: { kind: string }) {
  const text = "font-['Liberation_Serif',serif] font-bold";
  return (
    <Glyph w={22} h={20}>
      {kind === "size" && (
        <>
          <text x="-9" y="6" fontSize="11" fill={LIGHT} className={text}>T</text>
          <text x="-3" y="6" fontSize="18" fill={LIGHT} className={text}>T</text>
        </>
      )}
      {kind === "leading" && (
        <>
          {/* Two stacked lines with the spacing arrow beside them */}
          <path d="M-1.2-1L1.8-7.6L4.8-1M.2-3.4H3.4M-2.2 7L1.8-.2L5.8 7M-.4 4.2H4" stroke={LIGHT} strokeWidth="1.1" />
          <path d="M-6-3V6M-8-1L-6-3.4L-4-1M-8 4L-6 6.4L-4 4M-2.6-.6H6.2M-3.6 7.4H7.2" stroke={LIGHT} />
        </>
      )}
      {kind === "vertical" && (
        <>
          <text x="-3.6" y="6" fontSize="18" fill={LIGHT} className={text}>T</text>
          <path d="M-7-5V5M-9-3L-7-5.8L-5-3M-9 3L-7 5.8L-5 3" stroke={LIGHT} strokeWidth="1.1" />
        </>
      )}
      {kind === "horizontal" && (
        <>
          <text x="-5.7" y="3.4" fontSize="17" fill={LIGHT} className={text}>T</text>
          <path d="M-7 6.5H7M-5 4.5L-7.5 6.5L-5 8.5M5 4.5L7.5 6.5L5 8.5" stroke={LIGHT} />
        </>
      )}
      {kind === "kerning" && (
        <>
          <text x="-9.5" y="3.5" fontSize="12.5" letterSpacing="-1.4" fill={LIGHT} className="font-[Lato,sans-serif]">V/A</text>
          <path d="M0 6.8H7M2.4 4.6L0 6.8L2.4 9" stroke={LIGHT} />
        </>
      )}
      {kind === "tracking" && (
        <>
          <rect x="-9" y="-7.5" width="18" height="11" fill={LIGHT} />
          <text x="-7.6" y="2" fontSize="11.5" letterSpacing="-.6" fill="#484848" className="font-['Liberation_Serif',serif] font-bold">VA</text>
          <path d="M-8 6.5H8M-6 4.5L-8.5 6.5L-6 8.5M6 4.5L8.5 6.5L6 8.5" stroke={LIGHT} />
        </>
      )}
    </Glyph>
  );
}

const charRows = [
  [{ kind: "size", value: "12 pt" }, { kind: "leading", value: "(14.4 p" }],
  [{ kind: "vertical", value: "100%" }, { kind: "horizontal", value: "100%" }],
  [{ kind: "kerning", value: "自动" }, { kind: "tracking", value: "0" }],
];

function CharacterPanel() {
  return (
    <div className="flex h-[163px] shrink-0 flex-col border-b-[3px] border-[#3f3f3f]">
      <TabStrip
        active={0}
        tabs={[
          { label: "字符", width: "w-[41px]" },
          { label: "段落", width: "w-[38px]" },
          { label: "OpenType", width: "w-[68px] text-[11.8px]" },
        ]}
      />
      <div className="ml-[5px] mt-[6px] flex h-[19px] w-[219px] shrink-0">
        <Field className="w-[202px] rounded-l-[2px] pl-px">
          <SearchIcon />
          <span className="ml-[7px] pt-px text-[12.8px] tracking-[0.1px] text-[#f0f0f0]">Adobe 宋体 Std L</span>
        </Field>
        <Arrow />
      </div>
      <div className="ml-[5px] mt-[5px] flex h-[19px] w-[219px] shrink-0">
        <Field className="w-[202px] rounded-l-[2px] pl-[5px]">-</Field>
        <Arrow />
      </div>
      <div className="mx-[5px] mt-[5px] h-px shrink-0 bg-[#4a4a4a]" />
      <div className="mt-[5px] flex flex-col gap-[5.5px]">
        {charRows.map(([a, b]) => (
          <div key={a.kind} className="flex h-[19px] items-center pl-[2px]">
            <CharGlyph kind={a.kind} />
            <Stepper className="ml-px w-[16px]" />
            <Field className="w-[46px] pl-[3px]">{a.value}</Field>
            <Arrow />
            <div className="w-[17px]" />
            <CharGlyph kind={b.kind} />
            <Stepper className="ml-[2px] w-[16px]" />
            <Field className="w-[46px] pl-[3px]">{b.value}</Field>
            <Arrow />
          </div>
        ))}
      </div>
    </div>
  );
}

function TransparencyPanel() {
  return (
    <div className="flex h-[127px] shrink-0 flex-col border-b-[3px] border-[#3f3f3f]">
      <TabStrip
        active={2}
        tabs={[
          { label: "对齐", width: "w-[37px]" },
          { label: "渐变", width: "w-[37px]" },
          { label: "透明度", width: "w-[51px]" },
        ]}
      />
      <div className="mt-[5px] flex h-[20px] shrink-0 items-center pl-[5px] text-[12px] leading-none text-[#d8d8d8]">
        <div className="flex h-full w-[84px] items-center justify-between rounded-[2px] border border-[#5e5e5e] bg-[#484848] pl-[5px] pr-[3px] font-bold text-[#ececec]">
          正常
          <Chevron />
        </div>
        <div className="ml-[6px] w-[55px] whitespace-nowrap pt-px">不透明度:</div>
        <Field className="w-[52px]">100%</Field>
        <Arrow dir="right" />
      </div>
      <div className="mx-[5px] mt-[5px] h-px shrink-0 bg-[#4a4a4a]" />
      <div className="ml-[5px] mt-[5px] flex text-[12.2px] leading-none text-[#878787]">
        <div className="mt-[2px] h-[52px] w-[127px] rounded-[2px] border border-[#4b4b4b]" />
        <div className="ml-[3px]">
          <div className="flex h-[20px] w-[68px] items-center justify-center rounded-[2px] bg-[#595959] pt-[2px]">制作蒙版</div>
          {["剪切", "反相蒙版"].map((label) => (
            <div key={label} className="ml-px mt-[5.5px] flex h-[13px] items-center gap-[5px]">
              <div className="size-[11px] rounded-[1px] border border-[#727272]" />
              {label}
            </div>
          ))}
        </div>
      </div>
    </div>
  );
}

const BACK = "M-6.5-6.5H1.5V1.5H-6.5Z";
const FRONT = "M-1.8-1.8H6.2V6.2H-1.8Z";

function PathfinderPanel() {
  return (
    <div className="flex h-[129px] shrink-0 flex-col border-b-2 border-[#3f3f3f] text-[12.2px] leading-none text-[#d8d8d8]">
      <TabStrip active={0} tabs={[{ label: "路径查找器", width: "w-[67px]" }]} />
      <div className="ml-[5px] mt-[7px] h-[14px]">形状模式:</div>
      <div className="mt-[5px] flex h-[20px] items-center gap-[14px] pl-[7px]">
        <Glyph>
          <path d="M-6.5-6.5H2.5V-2.5H6.5V6.5H-2.5V2.5H-6.5Z" fill={LIGHT} />
        </Glyph>
        <Glyph>
          <path d="M-6.5-6.5H2.5V-3H-3V2.5H-6.5Z" fill={LIGHT} />
          <path d={FRONT} stroke={LIGHT} strokeWidth="1.1" />
        </Glyph>
        <Glyph>
          <path d="M-6-6H2V2H-6ZM-2-2H6V6H-2Z" stroke={LIGHT} strokeWidth="1.1" />
          <path d="M-2-2H2V2H-2Z" fill={LIGHT} />
        </Glyph>
        <Glyph>
          <path d="M-6.5-6.5H2.5V-2.5H6.5V6.5H-2.5V2.5H-6.5ZM-2.5-2.5V2.5H2.5V-2.5Z" fill={LIGHT} fillRule="evenodd" />
        </Glyph>
        <div className="-ml-[1px] flex h-[20px] w-[79px] items-center justify-center rounded-[2px] bg-[#595959] pt-[2px] text-[#888]">
          扩展
        </div>
      </div>
      <div className="ml-[5px] mt-[10px] h-[14px]">路径查找器:</div>
      <div className="mt-[5px] flex h-[20px] items-center gap-[16.6px] pl-[11px]">
        <Glyph>
          <path d="M-6.8-6.8H3V-4H-4V3H-6.8ZM6.8 6.8H-3V4H4V-3H6.8Z" fill={LIGHT} />
          <path d="M-3-3H3V3H-3Z" fill="#a8a8a8" stroke={LIGHT} />
        </Glyph>
        <Glyph>
          <path d="M-6.8-6.8H2.4V-3.4H-3.4V2.4H-6.8Z" fill={LIGHT} />
          <path d="M-2.4-2.4H6.6V6.6H-2.4Z" fill={LIGHT} />
        </Glyph>
        <Glyph>
          <path d="M-6.8-6.8H2.4V-2.6H6.6V6.6H-2.4V-1.2H-3.2V2.6H-6.8Z" fill={LIGHT} />
        </Glyph>
        <Glyph>
          <path d={BACK} stroke="#888" />
          <path d="M3-3H6V6H-3V3" stroke={LIGHT} />
          <path d="M-2.6-2.6H2.4V2.4H-2.6Z" fill={LIGHT} />
        </Glyph>
        <Glyph>
          <path d="M-6-6H2V-2H-2V2H-6ZM6 6H-2V2H2V-2H6Z" stroke={LIGHT} strokeWidth="1.1" />
          <path d="M-2 2L2-2" stroke={LIGHT} />
        </Glyph>
        <Glyph>
          <path d="M-6.3-6.3H2V2H-6.3Z" stroke={LIGHT} strokeWidth="1.2" />
          <path d="M3.2-2.4H6.8V6.8H-2.4V3.2H3.2Z" fill={LIGHT} />
        </Glyph>
      </div>
    </div>
  );
}

export default function App() {
  return (
    <div className="flex h-[750px] w-[1200px] flex-col overflow-hidden bg-[#424242] font-[Lato,'Noto_Sans_CJK_SC',sans-serif]">
      <MenuBar />
      <AppBar />
      <ControlBar />
      <div className="flex h-[665px] shrink-0">
        <ToolPanel />
        <DocumentArea />
        <div className="flex w-[270px] shrink-0 flex-col border-l-[3px] border-r border-[#3f3f3f] bg-[#535353]">
          <div className="flex h-[12px] shrink-0 items-center justify-between bg-[#434343] pl-[21px] pr-[4px]">
            <DoubleChevron />
            <DoubleChevron flip />
          </div>
          <div className="flex h-[653px]">
            <IconDock />
            <div className="flex w-[231px] shrink-0 flex-col border-l-[2px] border-[#3f3f3f]">
              <ColorPanel />
              <CharacterPanel />
              <TransparencyPanel />
              <PathfinderPanel />
            </div>
          </div>
        </div>
      </div>
    </div>
  );
}
